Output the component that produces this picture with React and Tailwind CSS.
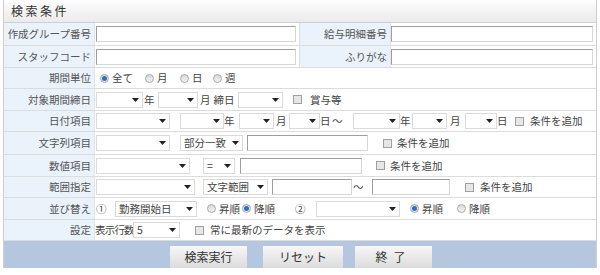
import React from "react";

const Arrow = () => (
  <svg width="7" height="4" viewBox="0 0 7 4" className="shrink-0">
    <path d="M0 0H7L3.5 4Z" fill="#222" />
  </svg>
);

function Sel({ cls, text = "" }) {
  return (
    <div className={"flex h-[16px] shrink-0 items-center justify-between border border-[#dadada] bg-white pl-[3px] pr-[3px] " + cls}>
      <span className="whitespace-nowrap leading-[14px]">{text}</span>
      <Arrow />
    </div>
  );
}

function Inp({ cls }) {
  return (
    <div className={"h-[16px] shrink-0 border border-t-[#9e9e9e] border-l-[#9e9e9e] border-r-[#d6d6d6] border-b-[#d6d6d6] bg-white " + cls} />
  );
}

function Radio({ checked }) {
  return (
    <span className="flex h-[9px] w-[9px] shrink-0 items-center justify-center rounded-full border border-[#a9a9a9] bg-gradient-to-b from-[#d8d8d8] to-[#f4f4f4]">
      {checked && <span className="h-[5px] w-[5px] rounded-full bg-[#2f6fc0]" />}
    </span>
  );
}

function Check({ cls = "" }) {
  return <span className={"h-[9px] w-[9px] shrink-0 border border-[#a0a0a0] bg-[#e6e6e6] " + cls} />;
}

function Label({ children }) {
  return (
    <div className="flex h-full w-[91px] shrink-0 items-center justify-end whitespace-nowrap border-r border-[#dfe5ec] bg-[#eaf2fb] pr-[3px] text-[#555]">
      {children}
    </div>
  );
}

function Row({ h, label, children }) {
  return (
    <div className={"flex border-b border-[#dcdcdc] " + h}>
      <Label>{label}</Label>
      <div className="flex flex-1 items-center whitespace-nowrap">{children}</div>
    </div>
  );
}

export default function App() {
  return (
    <div className="h-[275px] w-[600px] bg-white font-['Noto_Sans_CJK_JP',sans-serif] text-[10.5px] text-[#444]">
      <div className="ml-[3px] w-[594px] border-l border-r border-[#cfcfcf]">
        <div className="flex h-[23px] items-center border-b border-[#cfcfcf] bg-gradient-to-b from-[#fdfdfd] to-[#ebebeb] pl-[7px] text-[12px] tracking-[2.5px] text-[#333]">
          検索条件
        </div>

        <div className="flex h-[23px] border-b border-[#dcdcdc]">
          <Label>作成グループ番号</Label>
          <div className="flex w-[205px] items-center border-r border-[#dcdcdc]">
            <Inp cls="ml-[1px] w-[200px]" />
          </div>
          <Label>給与明細番号</Label>
          <div className="flex flex-1 items-center">
            <Inp cls="w-[202px]" />
          </div>
        </div>

        <div className="flex h-[22px] border-b border-[#dcdcdc]">
          <Label>スタッフコード</Label>
          <div className="flex w-[205px] items-center border-r border-[#dcdcdc]">
            <Inp cls="ml-[1px] w-[200px]" />
          </div>
          <Label>ふりがな</Label>
          <div className="flex flex-1 items-center">
            <Inp cls="w-[202px]" />
          </div>
        </div>

        <Row h="h-[21px]" label="期間単位">
          <span className="ml-[5px] flex w-[45px] items-center">
            <Radio checked />
            <span className="ml-[3px]">全て</span>
          </span>
          <span className="flex w-[35px] items-center">
            <Radio />
            <span className="ml-[3px]">月</span>
          </span>
          <span className="flex w-[33px] items-center">
            <Radio />
            <span className="ml-[3px]">日</span>
          </span>
          <span className="flex items-center">
            <Radio />
            <span className="ml-[3px]">週</span>
          </span>
        </Row>

        <Row h="h-[22px]" label="対象期間締日">
          <Sel cls="ml-[1px] w-[47px]" />
          <span className="w-[15px] shrink-0 pl-[1px]">年</span>
          <Sel cls="w-[40px]" />
          <span className="flex w-[40px] shrink-0 pl-[2px]">
            <span>月</span>
            <span className="ml-[3px]">締日</span>
          </span>
          <Sel cls="w-[45px]" />
          <Check cls="ml-[10px]" />
          <span className="ml-[8px]">賞与等</span>
        </Row>

        <Row h="h-[21px]" label="日付項目">
          <Sel cls="ml-[1px] w-[74px]" />
          <Sel cls="ml-[10px] w-[44px]" />
          <span className="w-[15px] shrink-0">年</span>
          <Sel cls="w-[35px]" />
          <span className="w-[15px] shrink-0 pl-[2px]">月</span>
          <Sel cls="w-[31px]" />
          <span className="w-[11px] shrink-0">日</span>
          <span className="w-[22px] shrink-0 pl-[1px]">～</span>
          <Sel cls="w-[47px]" />
          <span className="w-[12px] shrink-0">年</span>
          <Sel cls="w-[35px]" />
          <span className="w-[18px] shrink-0 pl-[3px]">月</span>
          <Sel cls="w-[32px]" />
          <span className="w-[12px] shrink-0">日</span>
          <Check cls="ml-[6px]" />
          <span className="ml-[6px]">条件を追加</span>
        </Row>

        <Row h="h-[23px]" label="文字列項目">
          <Sel cls="ml-[1px] w-[74px]" />
          <Sel cls="ml-[10px] w-[63px]" text="部分一致" />
          <Inp cls="ml-[4px] w-[121px]" />
          <Check cls="ml-[15px]" />
          <span className="ml-[5px]">条件を追加</span>
        </Row>

        <Row h="h-[22px]" label="数値項目">
          <Sel cls="ml-[1px] w-[94px]" />
          <Sel cls="ml-[13px] w-[32px]" text="=" />
          <Inp cls="ml-[5px] w-[122px]" />
          <Check cls="ml-[14px]" />
          <span className="ml-[5px]">条件を追加</span>
        </Row>

        <Row h="h-[21px]" label="範囲指定">
          <Sel cls="ml-[1px] w-[99px]" />
          <Sel cls="ml-[8px] w-[65px]" text="文字範囲" />
          <Inp cls="ml-[4px] w-[80px]" />
          <span className="w-[20px] shrink-0 pl-[1px]">～</span>
          <Inp cls="w-[78px]" />
          <Check cls="ml-[15px]" />
          <span className="ml-[6px]">条件を追加</span>
        </Row>

        <Row h="h-[22px]" label="並び替え">
          <span className="w-[20px] shrink-0 pl-[1px]">①</span>
          <Sel cls="w-[82px]" text="勤務開始日" />
          <span className="ml-[10px] flex w-[35px] shrink-0 items-center">
            <Radio />
            <span className="ml-[3px]">昇順</span>
          </span>
          <span className="flex w-[53px] shrink-0 items-center">
            <Radio checked />
            <span className="ml-[3px]">降順</span>
          </span>
          <span className="w-[21px] shrink-0">②</span>
          <Sel cls="w-[84px]" />
          <span className="ml-[10px] flex w-[47px] shrink-0 items-center">
            <Radio checked />
            <span className="ml-[3px]">昇順</span>
          </span>
          <span className="flex items-center">
            <Radio />
            <span className="ml-[3px]">降順</span>
          </span>
        </Row>

        <Row h="h-[21px]" label="設定">
          <span className="w-[38px] shrink-0 tracking-[-0.8px]">表示行数</span>
          <Sel cls="w-[47px]" text="5" />
          <Check cls="ml-[15px]" />
          <span className="ml-[6px]">常に最新のデータを表示</span>
        </Row>

        <div className="flex h-[27px] items-end bg-[#b5c7df]">
          <div className="ml-[166px] flex h-[22px] w-[77px] items-center justify-center bg-gradient-to-b from-[#f7f7f7] to-[#dcdcdc] text-[12px] text-[#333]">
            検索実行
          </div>
          <div className="ml-[16px] flex h-[22px] w-[80px] items-center justify-center bg-gradient-to-b from-[#f7f7f7] to-[#dcdcdc] text-[12px] text-[#333]">
            リセット
          </div>
          <div className="ml-[12px] flex h-[22px] w-[77px] items-center justify-center bg-gradient-to-b from-[#f7f7f7] to-[#dcdcdc] text-[12px] tracking-[6px] text-[#333]">
            終了
          </div>
        </div>
      </div>
    </div>
  );
}
